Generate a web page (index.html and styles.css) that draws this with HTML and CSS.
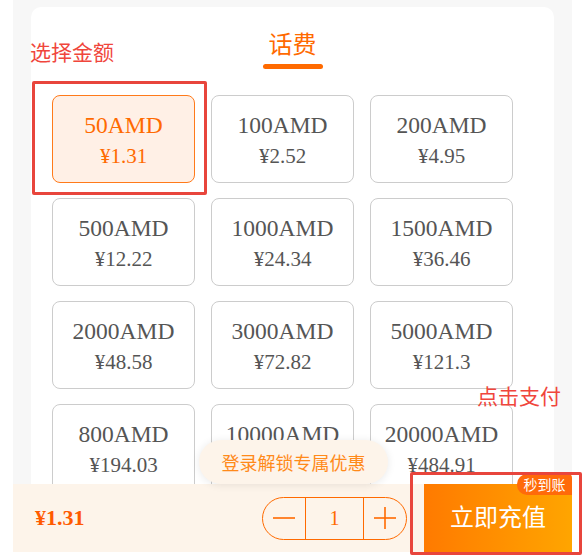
FILE: index.html
```html
<!DOCTYPE html>
<html lang="zh">
<head>
<meta charset="utf-8">
<title>话费充值</title>
<link rel="stylesheet" href="styles.css">
</head>
<body>
<div class="app">
  <div class="scroll">
    <div class="card">
      <div class="tabs">
        <div class="tab active">话费</div>
      </div>
      <div class="grid">
        <div class="tile selected"><div class="face">50AMD</div><div class="price">¥1.31</div></div>
        <div class="tile"><div class="face">100AMD</div><div class="price">¥2.52</div></div>
        <div class="tile"><div class="face">200AMD</div><div class="price">¥4.95</div></div>
        <div class="tile"><div class="face">500AMD</div><div class="price">¥12.22</div></div>
        <div class="tile"><div class="face">1000AMD</div><div class="price">¥24.34</div></div>
        <div class="tile"><div class="face">1500AMD</div><div class="price">¥36.46</div></div>
        <div class="tile"><div class="face">2000AMD</div><div class="price">¥48.58</div></div>
        <div class="tile"><div class="face">3000AMD</div><div class="price">¥72.82</div></div>
        <div class="tile"><div class="face">5000AMD</div><div class="price">¥121.3</div></div>
        <div class="tile"><div class="face">800AMD</div><div class="price">¥194.03</div></div>
        <div class="tile"><div class="face">10000AMD</div><div class="price">¥242.46</div></div>
        <div class="tile"><div class="face">20000AMD</div><div class="price">¥484.91</div></div>
      </div>
    </div>
  </div>
  <div class="bar">
    <div class="promo">登录解锁专属优惠</div>
    <div class="total">¥1.31</div>
    <div class="stepper">
      <button class="step" aria-label="减少"><svg width="22" height="22" viewBox="0 0 22 22"><line x1="0" y1="11" x2="22" y2="11" stroke="#ff6a00" stroke-width="1.6"/></svg></button>
      <div class="qty">1</div>
      <button class="step" aria-label="增加"><svg width="22" height="22" viewBox="0 0 22 22"><line x1="0" y1="11" x2="22" y2="11" stroke="#ff6a00" stroke-width="1.6"/><line x1="11" y1="0" x2="11" y2="22" stroke="#ff6a00" stroke-width="1.6"/></svg></button>
    </div>
    <button class="pay">立即充值<span class="badge">秒到账</span></button>
  </div>
</div>
<div class="note note-select">选择金额</div>
<div class="mark mark-select"></div>
<div class="note note-pay">点击支付</div>
<div class="mark mark-pay"></div>
</body>
</html>
```
FILE: styles.css
```css
html, body {
  margin: 0;
  padding: 0;
}
body {
  position: relative;
  width: 583px;
  height: 557px;
  background: #ffffff;
  overflow: hidden;
  font-family: "Noto Sans CJK SC", "Noto Sans", sans-serif;
}
.app {
  margin-left: 13px;
  width: 559px;
  height: 552px;
  background: #f7f7f7;
  display: flex;
  flex-direction: column;
}
.scroll {
  flex: 1;
  min-height: 0;
  overflow: hidden;
  padding: 7px 18px 0;
}
.card {
  background: #ffffff;
  border-radius: 10px;
  padding-top: 19px;
  padding-bottom: 20px;
}
.tabs {
  display: flex;
  justify-content: center;
}
.tab {
  display: flex;
  flex-direction: column;
  align-items: center;
  font-size: 24px;
  line-height: 34px;
  color: #ff6a00;
}
.tab.active::after {
  content: "";
  width: 60px;
  height: 5px;
  margin-top: 4px;
  border-radius: 3px;
  background: #ff6a00;
}
.grid {
  display: grid;
  grid-template-columns: repeat(3, 143px);
  column-gap: 16px;
  row-gap: 15px;
  padding-left: 21px;
  margin-top: 26px;
}
.tile {
  box-sizing: border-box;
  height: 88px;
  border: 1px solid #cccccc;
  border-radius: 8px;
  padding-top: 14px;
  text-align: center;
  color: #555555;
  font-family: "Liberation Serif", "Times New Roman", serif;
}
.tile.selected {
  background: #fff0e6;
  border-color: #ff7a1a;
  color: #ff6a00;
}
.face {
  font-size: 23.5px;
  line-height: 30px;
}
.price {
  font-size: 21px;
  line-height: 32px;
}
.bar {
  position: relative;
  flex: none;
  height: 68px;
  background: #fdf4ea;
  display: flex;
  align-items: center;
  padding-left: 22px;
}
.promo {
  position: absolute;
  left: 186px;
  bottom: 100%;
  width: 189px;
  height: 44px;
  border-radius: 22px;
  background: #fdf4ea;
  box-shadow: 0 1px 8px rgba(0, 0, 0, 0.09);
  display: flex;
  align-items: center;
  justify-content: center;
  font-size: 18px;
  color: #ff8a1a;
}
.total {
  flex: 1;
  font-family: "Liberation Serif", "Times New Roman", serif;
  font-weight: bold;
  font-size: 22px;
  color: #ff5a00;
}
.stepper {
  box-sizing: border-box;
  width: 145px;
  height: 43px;
  border: 1px solid #ff6a00;
  border-radius: 22px;
  display: flex;
  margin-right: 17px;
  overflow: hidden;
}
.step {
  width: 42px;
  padding: 0;
  border: none;
  background: transparent;
  display: flex;
  align-items: center;
  justify-content: center;
}
.qty {
  box-sizing: border-box;
  width: 59px;
  border-left: 1px solid #ff6a00;
  border-right: 1px solid #ff6a00;
  display: flex;
  align-items: center;
  justify-content: center;
  font-family: "Liberation Serif", "Times New Roman", serif;
  font-size: 20px;
  color: #ff6a00;
}
.pay {
  position: relative;
  align-self: stretch;
  width: 148px;
  padding: 0 0 5px;
  border: none;
  background: linear-gradient(90deg, #ff7a00, #ffa500);
  color: #ffffff;
  font-family: "Noto Sans CJK SC", "Noto Sans", sans-serif;
  font-size: 24px;
}
.badge {
  position: absolute;
  top: -10px;
  right: 0;
  width: 55px;
  height: 21px;
  line-height: 21px;
  border-radius: 10px 4px 0 10px;
  background: #ff6a0a;
  color: #ffffff;
  font-size: 14px;
  text-align: center;
}
.note {
  position: absolute;
  font-size: 21px;
  line-height: 21px;
  color: #f0463c;
}
.note-select {
  left: 30px;
  top: 41px;
}
.note-pay {
  left: 477px;
  top: 385px;
}
.mark {
  position: absolute;
  box-sizing: border-box;
  border: 3px solid #e8453c;
  border-radius: 2px;
}
.mark-select {
  left: 32px;
  top: 81px;
  width: 175px;
  height: 114px;
}
.mark-pay {
  left: 410px;
  top: 472px;
  width: 172px;
  height: 83px;
}
```
